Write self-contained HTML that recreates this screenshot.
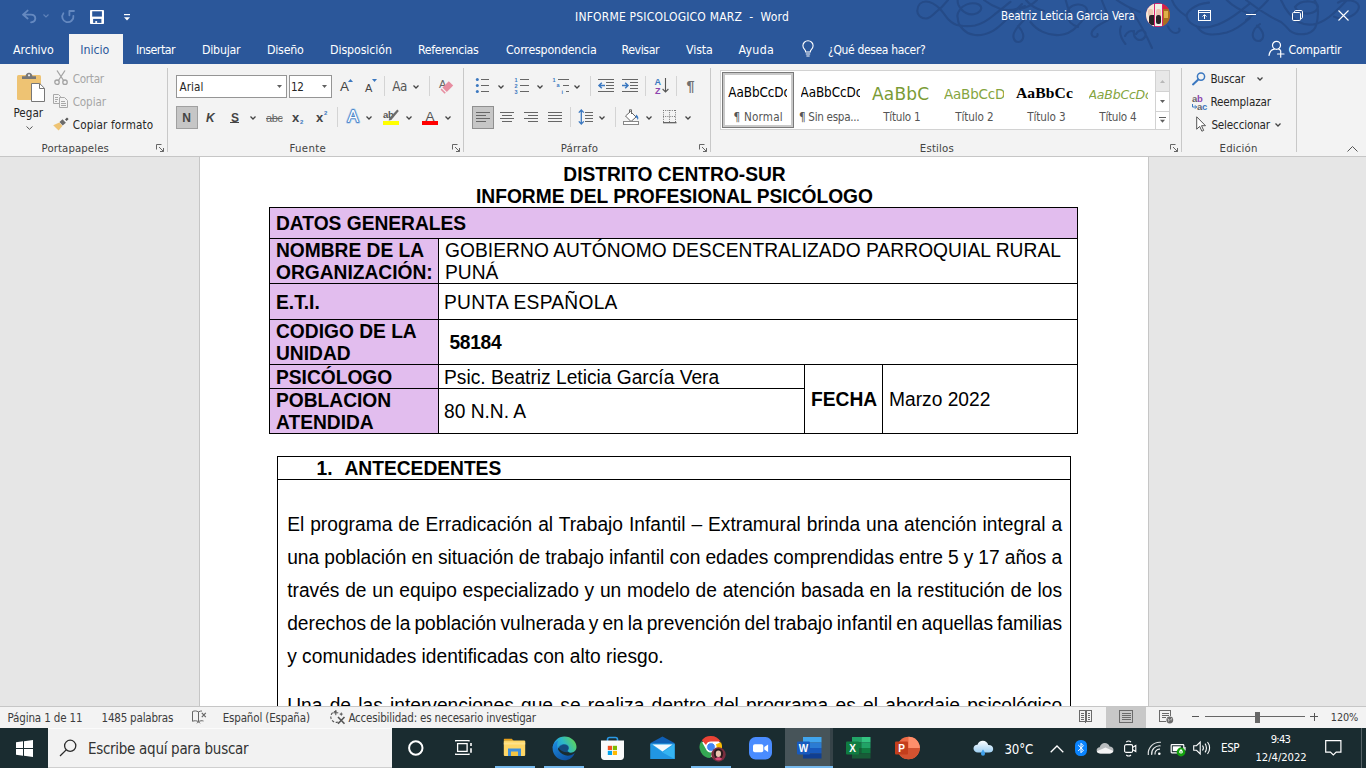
<!DOCTYPE html>
<html lang="es">
<head>
<meta charset="utf-8">
<title>INFORME PSICOLOGICO MARZ - Word</title>
<style>
*{box-sizing:border-box;margin:0;padding:0}
html,body{width:1366px;height:768px;overflow:hidden;background:#e6e6e6}
body{position:relative;font-family:"DejaVu Sans Condensed","DejaVu Sans","Liberation Sans",sans-serif;font-stretch:condensed;font-size:12px;color:#262626}
.a{position:absolute;white-space:nowrap;line-height:1}
svg{position:absolute;overflow:visible}
/* ---------- title bar + tabs ---------- */
#blue{left:0;top:0;width:1366px;height:64px;background:#2b579a}
.tt{color:#fff;font-size:12px}
.tab{color:#fff;font-size:12.4px;top:43px}
#tabsel{left:69px;top:34px;width:54px;height:30px;background:#f3f3f3}
/* ---------- ribbon ---------- */
#ribbon{left:0;top:64px;width:1366px;height:92px;background:#f3f3f3}
#ribline{left:0;top:156px;width:1366px;height:1px;background:#c6c6c6}
.sep{width:1px;background:#c8c8c8;top:68px;height:84px}
.sp{width:1px;background:#d4d4d4;height:20px}
.gl{font-size:11.5px;color:#444;top:142px}
.rt{font-size:12px;color:#262626}
.dis{color:#a6a6a6}
.box{background:#fff;border:1px solid #959595;top:75px;height:23px}
/* ---------- document ---------- */
#docbg{left:0;top:157px;width:1366px;height:549px;background:#e6e6e6;overflow:hidden}
#page{left:199px;top:0;width:950px;height:560px;background:#fff;border-left:1px solid #c6c6c6;border-right:1px solid #c6c6c6}
.doc{font-family:"Liberation Sans",sans-serif;font-size:19.2px;color:#000}
/* ---------- status bar ---------- */
#status{left:0;top:706px;width:1366px;height:22px;background:#f3f3f3;border-top:1px solid #c6c6c6}
.st{font-size:11.4px;color:#3c3c3c;top:712px}
/* ---------- taskbar ---------- */
#task{left:0;top:728px;width:1366px;height:40px;background:#1a2c30}
#search{left:48px;top:728px;width:344px;height:40px;background:#f2f2f2;border-top:1px solid #fbfbfb}
.tk{color:#fff}
</style>
</head>
<body>
<!-- ============ TITLE BAR ============ -->
<div id="blue" class="a"></div>
<!-- decorative calligraphy swirls (office background) -->
<svg class="a" style="left:900px;top:0" width="466" height="64" viewBox="900 0 466 64" fill="none" stroke="#254b88" stroke-width="2.100" stroke-linecap="round">
<path d="M948 0C944 5 940 9 936 12c-4 4-7 6.500-10 6.500-5 0-9-3.500-8.700-8C917.600 5 921 1.500 926 1.500c5 0 10 3.500 14 7.500s6 8 9 11 6 5 10.500 5.500c5.500.8 10.500.8 15.500 0 7-1.500 13-5.500 18-9.700C999 11 1005 6 1010.500 1.800"/>
<path d="M957.700 0c-.2 2 .3 4 .9 5.300 1.400 2.700 3.400 5.700 7.400 7.700 5 2.500 11 1.500 14-2 2.500-3 1-6.500-4-7.500-6-1.200-13 1.500-16 6-2.500 3.500-3 6.500-2.300 8.100.3 4.400 1.300 7.400 3.300 9.400 3 4 8 7.500 14 8 7 .6 13-1.500 18-4.200 5-2.800 9-6.800 13-10.800s10-10 16-16"/>
<path d="M1018.400 42c-4.400 0-5.900-5-4.400-9 2-5 6-9 10-13M1018.400 42c3.600 0 5.600-4 4.600-8-1-4-3-6-5-8M984 0c5 4 11 7 16 8.800 8 2.700 16 1.200 25-2.800"/>
<path d="M1020 9c6-1 12-4 17-9M1026 0c4 5 10 9 18 11M1030.500 22c6 8 17 14 29 13 8-.6 13-4 17.500-8.600 5-5 9-10 10-13.400 1.500-5-3-9-9.500-8.500-7 .6-11 5-10.500 10.500.5 5 4 9.500 11 12M1065.700 0c1 5 3 10 5 14M1108 20c-5 3-11 5-15 10-2.500 3-1.500 6.500 1.500 7 2 .3 3.500-1 3-3M1101.700 0c1.500 4 3 7.500 4.300 10.500 1.500 3.500 2 6.500 2 9.500M1116.700 0c7 5 15 9 23.300 12M1121 26.400c-2 5 0 12 4.400 17.600M1125 36c2-4 6-6 8.500-4.500"/>
<path d="M1130 8c8 12 16 26 22 40M1136 34c2-4 7-5 9-2s-1 8-5 8-7-4-6-9M1167.800 26.400c2 4 5 7 8.500 6.600 3-.4 4-3 2.700-4.500M1172 0c2 6 7 11.500 14 15.800M1209 2.600c-7 .5-13.500 3-17.500 6.200-4 3-5.500 6.500-4.500 8.800 1 4 4.800 7 9.800 8.800 6 2 14 1 21.200-1.800 9-3.600 16-8.600 22-13.200 3-2.500 7-5.500 10-8.200M1196.800 26.400c3 4.600 7 7.400 12.200 7.900 6 .6 12-.4 17.700-1.800 9-2.500 16-8 23.300-14.500M1226.700 0c6 6 14 10.500 23.300 14"/>
<path d="M1246 0c10 8 22 16 35 22 4 3 7 6.500 9 8.800 5 3.500 12 4 17.500 2.600 5-1.500 8-5 8.800-8.800 1.200-4 1.500-8 1.700-11.400.2-5-1-9.500-3.500-13.200M1268 0c-6 7-14 14-22 20M1281 0c4 9 10 17 17.700 22 6 3 12 3.200 17.600 1.700 7-2 12.500-6 17.600-10.700 5-4.500 9-8.500 13.100-13M1295 7c3-4 9-6 15-5.500 6 .5 9 3.500 7.500 7-1.500 3.500-7 5.500-12 5-5-.5-9-3-10.500-6.500M1258.300 41c-4 0-6.300-4-5.300-8s4-7 7-9M1258.300 41c3.500 0 5.500-3.500 4.700-7-.8-3.500-3-6-6-8.500M1338 2.600c3-2 8-3 13-2.100 6 1 9 4.500 7.500 8.300-1.500 4-6 7-11 8.800-5 1.500-10 1-13.500-1"/>
</svg>
<!-- quick access toolbar -->
<svg class="a" style="left:21px;top:9px" width="16" height="15" viewBox="0 0 16 15" fill="none" stroke="#6589c0" stroke-width="1.900" stroke-linecap="round" stroke-linejoin="round"><path d="M6.600 1.600L2 5.600l4.600 3.800M2.400 5.600h7.400c2.700 0 4.500 1.700 4.500 3.900 0 2-1.500 3.500-4.200 3.900"/></svg>
<svg class="a" style="left:43px;top:14px" width="6" height="4" viewBox="0 0 6 4" fill="none" stroke="#5f82b9" stroke-width="1.100"><path d="M.5.500L3 3 5.500.500"/></svg>
<svg class="a" style="left:60px;top:9px" width="15" height="15" viewBox="0 0 15 15" fill="none" stroke="#6589c0" stroke-width="1.800" stroke-linecap="round" stroke-linejoin="round"><path d="M3.400 4.200A5.600 5.600 0 1 0 13.400 6.800M9.400 6.300V2h4.600"/></svg>
<svg class="a" style="left:90px;top:10px" width="14" height="14" viewBox="0 0 14 14"><rect x="0" y="0" width="14" height="14" rx=".8" fill="#fff"/><rect x="2.200" y="1.300" width="9.700" height="5.300" fill="#2b579a"/><rect x="3.100" y="8.900" width="8.300" height="4" fill="#2b579a"/><rect x="5.300" y="11.100" width="1.800" height="1.800" fill="#fff"/></svg>
<svg class="a" style="left:123.500px;top:13.500px" width="6" height="7" viewBox="0 0 6 7" fill="#fff"><rect x="0" y="0" width="6" height="1.200"/><path d="M0 3.300h6L3 6.500z"/></svg>
<div class="a tt" style="left:575.0px;top:11.1px;font-size:12px;letter-spacing:0.197px;white-space:pre;">INFORME PSICOLOGICO MARZ  -  Word</div>
<div class="a tt" style="left:1001.0px;top:10.9px;font-size:11.5px;letter-spacing:-0.100px;">Beatriz Leticia Garcia Vera</div>
<!-- avatar -->
<div class="a" style="left:1146.200px;top:3px;width:24px;height:24px;border-radius:50%;overflow:hidden;background:#e0206e">
 <div class="a" style="left:0;top:0;width:8px;height:24px;background:#f3ead9"></div>
 <div class="a" style="left:2px;top:6px;width:5px;height:7px;background:#edc7b2;border-radius:2px"></div>
 <div class="a" style="left:3px;top:12px;width:5px;height:10px;background:#2a2226;border-radius:2px 0 0 2px"></div>
 <div class="a" style="left:9px;top:1px;width:7px;height:22px;background:#eef0e4"></div>
 <div class="a" style="left:10px;top:6px;width:5px;height:7px;background:#efc3b4;border-radius:2px"></div>
 <div class="a" style="left:9.500px;top:12px;width:5px;height:9px;background:#2a2226;border-radius:2px"></div>
 <div class="a" style="left:17px;top:0;width:7px;height:6px;background:#d6243e"></div>
 <div class="a" style="left:17px;top:6px;width:7px;height:18px;background:#a8701f"></div>
 <div class="a" style="left:18px;top:8px;width:4px;height:7px;background:#e0b04a"></div>
</div>
<!-- window controls -->
<svg class="a" style="left:1198px;top:10px" width="13" height="11" viewBox="0 0 13 11" fill="none" stroke="#fff" stroke-width="1"><path d="M.5.500h12v10H.5zM.5 2.500h12" shape-rendering="crispEdges"/><path d="M6.500 9V4.800M4.500 6.600l2-2 2 2"/></svg>
<div class="a" style="left:1246px;top:14px;width:10px;height:1px;background:#fff"></div>
<svg class="a" style="left:1292px;top:10px" width="11" height="11" viewBox="0 0 11 11" fill="none" stroke="#fff" stroke-width="1"><rect x=".5" y="2.500" width="8" height="8" rx="1.200"/><path d="M2.500 2.500V1.700C2.500 1 3 .5 3.700 .5H9.300c.7 0 1.200.5 1.200 1.200V7.300c0 .7-.5 1.200-1.200 1.200H8.500"/></svg>
<svg class="a" style="left:1338px;top:10px" width="11" height="11" viewBox="0 0 11 11" fill="none" stroke="#fff" stroke-width="1.100"><path d="M.5.500l10 10M10.500.500l-10 10"/></svg>
<!-- tabs -->
<div id="tabsel" class="a"></div>
<div class="a tab" style="left:13.0px;top:44.0px;font-size:12.3px;letter-spacing:-0.092px;">Archivo</div>
<div class="a tab" style="left:80.2px;top:44.0px;font-size:12.3px;letter-spacing:-0.041px;color:#2b579a;">Inicio</div>
<div class="a tab" style="left:136.0px;top:44.0px;font-size:12.3px;letter-spacing:-0.501px;">Insertar</div>
<div class="a tab" style="left:202.0px;top:44.0px;font-size:12.3px;letter-spacing:-0.248px;">Dibujar</div>
<div class="a tab" style="left:267.0px;top:44.0px;font-size:12.3px;letter-spacing:-0.236px;">Diseño</div>
<div class="a tab" style="left:330.0px;top:44.0px;font-size:12.3px;letter-spacing:-0.091px;">Disposición</div>
<div class="a tab" style="left:418.0px;top:44.0px;font-size:12.3px;letter-spacing:-0.367px;">Referencias</div>
<div class="a tab" style="left:506.0px;top:44.0px;font-size:12.3px;letter-spacing:-0.177px;">Correspondencia</div>
<div class="a tab" style="left:621.5px;top:44.0px;font-size:12.3px;letter-spacing:-0.434px;">Revisar</div>
<div class="a tab" style="left:686.0px;top:44.0px;font-size:12.3px;letter-spacing:-0.117px;">Vista</div>
<div class="a tab" style="left:738.5px;top:44.0px;font-size:12.3px;letter-spacing:0.297px;">Ayuda</div>
<svg class="a" style="left:802px;top:40px" width="12" height="17" viewBox="0 0 12 17" fill="none" stroke="#fff" stroke-width="1.100"><path d="M6 .8C3.100.8.900 3 .9 5.700c0 1.700.9 2.900 1.800 3.900.7.800 1 1.500 1 2.400h4.600c0-.9.300-1.600 1-2.400.9-1 1.800-2.200 1.800-3.900C11.100 3 8.900.8 6 .8zM3.800 14h4.400M4.400 16h3.200"/></svg>
<div class="a tab" style="left:828.0px;top:43.9px;font-size:12px;letter-spacing:-0.339px;">¿Qué desea hacer?</div>
<svg class="a" style="left:1268px;top:40px" width="17" height="17" viewBox="0 0 17 17" fill="none" stroke="#fff" stroke-width="1.200" stroke-linecap="round"><circle cx="8.500" cy="5.300" r="4"/><path d="M1 15.500c.5-3.600 2.600-5.800 5.300-6.300M10.800 9.300c.5.100 1 .4 1.400.7M9.500 14h6.500M12.700 10.800v6.400"/></svg>
<div class="a tab" style="left:1288.5px;top:44.0px;font-size:12.3px;letter-spacing:-0.316px;">Compartir</div>

<!-- ============ RIBBON ============ -->
<div id="ribbon" class="a"></div>
<div id="ribline" class="a"></div>
<!-- group separators -->
<div class="a sep" style="left:167px"></div><div class="a sep" style="left:463px"></div><div class="a sep" style="left:710px"></div><div class="a sep" style="left:1181px"></div><div class="a sep" style="left:1296px"></div>
<!-- ===== Portapapeles ===== -->
<svg class="a" style="left:17px;top:72px" width="28" height="30" viewBox="0 0 28 30">
<rect x="0" y="3" width="24" height="25" rx="1.500" fill="#eec373"/>
<path d="M5 7V4.300h3.600C8.800 2.200 10 .8 12 .8s3.200 1.400 3.400 3.500H19V7z" fill="#777"/><circle cx="12" cy="3.300" r="1.100" fill="#f3f3f3"/>
<path d="M14.500 11.500h8.200l4.800 4.800V29.500h-13z" fill="#fff" stroke="#777" stroke-width="1"/><path d="M22.500 11.700V16.500h4.800" fill="none" stroke="#777" stroke-width="1"/>
</svg>
<div class="a rt" style="left:13.4px;top:108.3px;font-size:11.6px;letter-spacing:0.022px;">Pegar</div>
<svg class="a" style="left:26px;top:126px" width="7" height="4" viewBox="0 0 7 4" fill="none" stroke="#555" stroke-width="1"><path d="M.5.500l3 2.800 3-2.800"/></svg>
<svg class="a" style="left:54px;top:70px" width="14" height="15" viewBox="0 0 14 15" fill="none" stroke="#a3a3a3" stroke-width="1.300"><path d="M3 .5l6.600 10M11 .5L4.400 10.500"/><circle cx="3" cy="12.200" r="2.200"/><circle cx="11" cy="12.200" r="2.200"/></svg>
<div class="a rt dis" style="left:72.7px;top:73.8px;font-size:11.6px;letter-spacing:-0.266px;">Cortar</div>
<svg class="a" style="left:53px;top:94px" width="15" height="14" viewBox="0 0 15 14" fill="none" stroke="#a8a8a8" stroke-width="1"><path d="M.5.500h5l2 2v7h-7z" fill="#f3f3f3"/><path d="M2 3.500h3M2 5.500h3M2 7.500h2"/><path d="M6.500 3.500h5l3 3v7h-8z" fill="#f3f3f3"/><path d="M8 7.500h4M8 9.500h5M8 11.500h5"/></svg>
<div class="a rt dis" style="left:72.7px;top:96.8px;font-size:11.6px;letter-spacing:-0.116px;">Copiar</div>
<svg class="a" style="left:53px;top:117px" width="16" height="14" viewBox="0 0 16 14"><path d="M.2 8.200l6.200-2.600 3 3.400-3.800 4.600z" fill="#eec373"/><path d="M6.500 5l3-2.800 3.400 3.600-3.200 2.800z" fill="#6b6b6b"/><path d="M12 2.400L14 .4l1.600 1.700-2 2z" fill="#555"/></svg>
<div class="a rt" style="left:72.7px;top:119.9px;font-size:11.6px;letter-spacing:0.166px;">Copiar formato</div>
<div class="a gl" style="left:41.6px;top:142.7px;font-size:11.3px;letter-spacing:0.100px;">Portapapeles</div>
<svg class="a lau" style="left:156px;top:144px" width="8" height="8" viewBox="0 0 8 8" fill="none" stroke="#666" stroke-width="1"><path d="M.5 5.500V.500h5M3 3l4.500 4.500M7.500 4v3.500H4"/></svg>
<!-- ===== Fuente ===== -->
<div class="a box" style="left:176px;width:111px"></div>
<div class="a box" style="left:289px;width:43px"></div>
<div class="a rt" style="left:179.5px;top:81.6px;font-size:11.6px;letter-spacing:0.098px;">Arial</div>
<div class="a rt" style="left:291.0px;top:81.6px;font-size:11.6px;letter-spacing:-.5px;">12</div>
<svg class="a" style="left:277px;top:85px" width="5" height="3" viewBox="0 0 5 3"><path d="M0 0h5L2.500 3z" fill="#606060"/></svg>
<svg class="a" style="left:322px;top:85px" width="5" height="3" viewBox="0 0 5 3"><path d="M0 0h5L2.500 3z" fill="#606060"/></svg>
<!-- grow / shrink / case / clear -->
<div class="a" style="left:340px;top:79.200px;font:13.5px 'Liberation Sans',sans-serif;color:#444">A</div>
<svg class="a" style="left:348px;top:79px" width="5" height="3" viewBox="0 0 5 3"><path d="M0 3h5L2.500 0z" fill="#3b78c0"/></svg>
<div class="a" style="left:365px;top:81.800px;font:11px 'Liberation Sans',sans-serif;color:#444">A</div>
<svg class="a" style="left:372px;top:79px" width="5" height="3" viewBox="0 0 5 3"><path d="M0 0h5L2.500 3z" fill="#3b78c0"/></svg>
<div class="a sp" style="left:384px;top:76px"></div>
<div class="a rt" style="left:392.2px;top:80.1px;font-size:13.3px;letter-spacing:-0.381px;color:#555;">Aa</div>
<svg class="a car" style="left:413px;top:85px" width="6" height="4" viewBox="0 0 6 4" fill="none" stroke="#444" stroke-width="1.250"><path d="M.5.500L3 3 5.500.500"/></svg>
<div class="a sp" style="left:429px;top:76px"></div>
<div class="a" style="left:439px;top:78px;font:11px 'Liberation Sans',sans-serif;color:#666">A</div>
<svg class="a" style="left:441px;top:80px" width="13" height="14" viewBox="0 0 13 14"><path d="M7.800 1.200L12.200 5.600 5.800 12 1.400 7.600z" fill="#e78da0"/><path d="M.6 8.600l4.200 4.200-1.200 1-4-4z" fill="#e78da0"/></svg>
<!-- row 2 -->
<div class="a" style="left:176px;top:106px;width:22px;height:23px;background:#c6c6c6;border:1px solid #a0a0a0"></div>
<div class="a" style="left:182.300px;top:110.500px;font:bold 12px 'Liberation Sans',sans-serif;color:#444">N</div>
<div class="a" style="left:206px;top:110.500px;font:italic bold 12px 'Liberation Sans',sans-serif;color:#444">K</div>
<div class="a" style="left:231px;top:110.500px;font:bold 12px 'Liberation Sans',sans-serif;color:#444">S</div>
<div class="a" style="left:230px;top:122px;width:9px;height:1px;background:#444"></div>
<svg class="a car" style="left:250px;top:116px" width="6" height="4" viewBox="0 0 6 4" fill="none" stroke="#444" stroke-width="1.250"><path d="M.5.500L3 3 5.500.500"/></svg>
<div class="a" style="left:266px;top:112px;font:11px 'Liberation Sans',sans-serif;color:#666;letter-spacing:-.4px;text-decoration:line-through">abc</div>
<div class="a" style="left:292px;top:109.500px;font:bold 13px 'Liberation Sans',sans-serif;color:#444">x</div>
<div class="a" style="left:300px;top:119px;font:bold 6px 'Liberation Sans',sans-serif;color:#3b78c0">2</div>
<div class="a" style="left:316px;top:109.500px;font:bold 13px 'Liberation Sans',sans-serif;color:#444">x</div>
<div class="a" style="left:324px;top:109.500px;font:bold 6px 'Liberation Sans',sans-serif;color:#3b78c0">2</div>
<div class="a sp" style="left:337px;top:107px"></div>
<svg class="a" style="left:344px;top:107px" width="18" height="18" viewBox="0 0 18 18"><text x="9" y="15.300" text-anchor="middle" font-family="Liberation Sans,sans-serif" font-size="16.500" fill="none" stroke="#a9cbee" stroke-width="3.200" stroke-linejoin="round">A</text><text x="9" y="15.300" text-anchor="middle" font-family="Liberation Sans,sans-serif" font-size="16.500" fill="#fff" stroke="#3b78c0" stroke-width="1.500" paint-order="stroke" stroke-linejoin="round">A</text></svg>
<svg class="a car" style="left:366px;top:116px" width="6" height="4" viewBox="0 0 6 4" fill="none" stroke="#444" stroke-width="1.250"><path d="M.5.500L3 3 5.500.500"/></svg>
<div class="a" style="left:383px;top:108.500px;font:bold 9.500px 'Liberation Sans',sans-serif;color:#555;letter-spacing:-.3px">ab</div>
<svg class="a" style="left:387px;top:109px" width="12" height="12" viewBox="0 0 12 12"><path d="M10.300.6l1.500 1.300L4.300 11l-2.600.6.700-2.500z" fill="#6b6b6b"/></svg>
<div class="a" style="left:383px;top:121px;width:16px;height:4px;background:#ffff00"></div>
<svg class="a car" style="left:406px;top:116px" width="6" height="4" viewBox="0 0 6 4" fill="none" stroke="#444" stroke-width="1.250"><path d="M.5.500L3 3 5.500.500"/></svg>
<div class="a" style="left:425.500px;top:109px;font:13.500px 'Liberation Sans',sans-serif;color:#555">A</div>
<div class="a" style="left:422px;top:121px;width:16px;height:4px;background:#ff0000"></div>
<svg class="a car" style="left:445px;top:116px" width="6" height="4" viewBox="0 0 6 4" fill="none" stroke="#444" stroke-width="1.250"><path d="M.5.500L3 3 5.500.500"/></svg>
<div class="a gl" style="left:289.5px;top:142.7px;font-size:11.3px;letter-spacing:0.350px;">Fuente</div>
<svg class="a lau" style="left:452px;top:144px" width="8" height="8" viewBox="0 0 8 8" fill="none" stroke="#666" stroke-width="1"><path d="M.5 5.500V.500h5M3 3l4.500 4.500M7.500 4v3.500H4"/></svg>
<!-- ===== Párrafo ===== -->
<svg class="a" style="left:475px;top:77px" width="16" height="17" viewBox="0 0 16 17"><g fill="#3b78c0"><circle cx="2.300" cy="2.500" r="1.500"/><circle cx="2.300" cy="8.500" r="1.500"/><circle cx="2.300" cy="14.500" r="1.500"/></g><path d="M6 2.500h8M6 8.500h8M6 14.500h8" stroke="#666" stroke-width="1" shape-rendering="crispEdges"/></svg>
<svg class="a car" style="left:498px;top:85px" width="6" height="4" viewBox="0 0 6 4" fill="none" stroke="#444" stroke-width="1.250"><path d="M.5.500L3 3 5.500.500"/></svg>
<svg class="a" style="left:514px;top:77px" width="16" height="17" viewBox="0 0 16 17"><g font-family="Liberation Sans,sans-serif" font-size="5.500" font-weight="bold" fill="#3b78c0"><text x=".5" y="4.800">1</text><text x=".5" y="10.700">2</text><text x=".5" y="16.500">3</text></g><path d="M6 2.500h9M6 8.500h9M6 14.500h9" stroke="#666" stroke-width="1" shape-rendering="crispEdges"/></svg>
<svg class="a car" style="left:537px;top:85px" width="6" height="4" viewBox="0 0 6 4" fill="none" stroke="#444" stroke-width="1.250"><path d="M.5.500L3 3 5.500.500"/></svg>
<svg class="a" style="left:552px;top:77px" width="18" height="17" viewBox="0 0 18 17"><g font-family="Liberation Sans,sans-serif" font-size="5.500" font-weight="bold" fill="#3b78c0"><text x=".5" y="4.800">1</text><text x="4.500" y="10.400">a</text><text x="9.500" y="16.500">i</text></g><path d="M6 2.500h10.500M11 8.500h5.500M14 14.500h2.500" stroke="#666" stroke-width="1" shape-rendering="crispEdges"/></svg>
<svg class="a car" style="left:574px;top:85px" width="6" height="4" viewBox="0 0 6 4" fill="none" stroke="#444" stroke-width="1.250"><path d="M.5.500L3 3 5.500.500"/></svg>
<div class="a sp" style="left:590px;top:76px"></div>
<svg class="a" style="left:598px;top:79px" width="16" height="13" viewBox="0 0 16 13"><path d="M0 .5h16M8 3.500h8M8 6.500h8M8 9.500h8M0 12.500h16" stroke="#666" stroke-width="1" shape-rendering="crispEdges"/><path d="M7 6.500H1.200M3.800 3.800L1 6.500l2.800 2.700" fill="none" stroke="#3b78c0" stroke-width="1.500"/></svg>
<svg class="a" style="left:622px;top:79px" width="16" height="13" viewBox="0 0 16 13"><path d="M0 .5h16M8 3.500h8M8 6.500h8M8 9.500h8M0 12.500h16" stroke="#666" stroke-width="1" shape-rendering="crispEdges"/><path d="M0 6.500h5.800M3.200 3.800L6 6.500 3.200 9.200" fill="none" stroke="#3b78c0" stroke-width="1.500"/></svg>
<div class="a sp" style="left:645px;top:76px"></div>
<div class="a" style="left:654.500px;top:77px;font:bold 9px 'Liberation Sans',sans-serif;color:#3b78c0">A</div>
<div class="a" style="left:655px;top:85.500px;font:bold 9px 'Liberation Sans',sans-serif;color:#8e44ad">Z</div>
<svg class="a" style="left:662px;top:78px" width="7" height="15" viewBox="0 0 7 15" fill="none" stroke="#555" stroke-width="1.100"><path d="M3.500 0v14M.6 11l2.900 3 2.900-3"/></svg>
<div class="a sp" style="left:676px;top:76px"></div>
<div class="a" style="left:686.500px;top:78px;font:bold 14.500px 'Liberation Sans',sans-serif;color:#707070">¶</div>
<!-- row 2 -->
<div class="a" style="left:472px;top:106px;width:22px;height:23px;background:#c6c6c6;border:1px solid #8f8f8f"></div>
<svg class="a" style="left:476px;top:112px" width="14" height="10" viewBox="0 0 14 10" stroke="#666" stroke-width="1" shape-rendering="crispEdges"><path d="M0 .5h14M0 3.500h10M0 6.500h14M0 9.500h10"/></svg>
<svg class="a" style="left:500px;top:112px" width="14" height="10" viewBox="0 0 14 10" stroke="#666" stroke-width="1" shape-rendering="crispEdges"><path d="M0 .5h14M2 3.500h10M0 6.500h14M2 9.500h10"/></svg>
<svg class="a" style="left:524px;top:112px" width="14" height="10" viewBox="0 0 14 10" stroke="#666" stroke-width="1" shape-rendering="crispEdges"><path d="M0 .5h14M4 3.500h10M0 6.500h14M4 9.500h10"/></svg>
<svg class="a" style="left:548px;top:112px" width="14" height="10" viewBox="0 0 14 10" stroke="#666" stroke-width="1" shape-rendering="crispEdges"><path d="M0 .5h14M0 3.500h14M0 6.500h14M0 9.500h14"/></svg>
<div class="a sp" style="left:570px;top:107px"></div>
<svg class="a" style="left:578px;top:109px" width="15" height="16" viewBox="0 0 15 16" fill="none"><path d="M3.300 1v14M.8 3.600L3.300 1l2.500 2.600M.8 12.400L3.300 15l2.500-2.600" stroke="#3b78c0" stroke-width="1.300"/><path d="M7 3.500h8M7 6.500h8M7 9.500h8M7 12.500h8" stroke="#666" stroke-width="1" shape-rendering="crispEdges"/></svg>
<svg class="a car" style="left:599px;top:116px" width="6" height="4" viewBox="0 0 6 4" fill="none" stroke="#444" stroke-width="1.250"><path d="M.5.500L3 3 5.500.500"/></svg>
<div class="a sp" style="left:615px;top:107px"></div>
<svg class="a" style="left:623px;top:109px" width="17" height="16" viewBox="0 0 17 16" fill="none"><path d="M7.500 2.500l5.500 5.500-5 4.500L2.500 7z" fill="#fff" stroke="#666" stroke-width="1"/><path d="M6.500 4V.8h2V5" stroke="#666" stroke-width="1"/><path d="M13.200 5.500c2 1.500 2.800 3.500 1.600 5.500-.4-1.600-1.200-2.600-2.400-3z" fill="#3b78c0"/><rect x=".5" y="12.500" width="15" height="3" fill="#fff" stroke="#888" stroke-width="1"/></svg>
<svg class="a car" style="left:646px;top:116px" width="6" height="4" viewBox="0 0 6 4" fill="none" stroke="#444" stroke-width="1.250"><path d="M.5.500L3 3 5.500.500"/></svg>
<svg class="a" style="left:663px;top:110px" width="14" height="14" viewBox="0 0 14 14" fill="none" stroke="#777" stroke-width="1"><path d="M.5 0v12M6.500 0v12M12.500 0v12M0 .5h13M0 6.500h13" stroke-dasharray="1 1.200"/><path d="M0 12.700h13.500" stroke="#555" stroke-width="1.200"/></svg>
<svg class="a car" style="left:685px;top:116px" width="6" height="4" viewBox="0 0 6 4" fill="none" stroke="#444" stroke-width="1.250"><path d="M.5.500L3 3 5.500.500"/></svg>
<div class="a gl" style="left:560.7px;top:142.7px;font-size:11.3px;letter-spacing:0.199px;">Párrafo</div>
<svg class="a lau" style="left:699px;top:144px" width="8" height="8" viewBox="0 0 8 8" fill="none" stroke="#666" stroke-width="1"><path d="M.5 5.500V.500h5M3 3l4.500 4.500M7.500 4v3.500H4"/></svg>
<!-- ===== Estilos ===== -->
<div class="a" style="left:720px;top:70px;width:450px;height:60px;background:#fff;border:1px solid #d2d2d2"></div>
<div class="a" style="left:722px;top:72px;width:72px;height:56px;border:1px solid #7a7a7a;background:#c9c9c9"></div>
<div class="a" style="left:725px;top:75px;width:66px;height:50px;background:#fff"></div>
<div class="a" style="left:1155px;top:71px;width:14px;height:58px;background:#fff;border-left:1px solid #d2d2d2"></div>
<div class="a" style="left:1156px;top:71px;width:13px;height:20px;background:#e8e8e8"></div>
<div class="a" style="left:1155px;top:91px;width:14px;height:1px;background:#d2d2d2"></div>
<div class="a" style="left:1155px;top:111px;width:14px;height:1px;background:#d2d2d2"></div>
<svg class="a" style="left:1160px;top:80px" width="5" height="3" viewBox="0 0 5 3"><path d="M0 3h5L2.500 0z" fill="#b8b8b8"/></svg>
<svg class="a" style="left:1160px;top:100px" width="5" height="3" viewBox="0 0 5 3"><path d="M0 0h5L2.500 3z" fill="#606060"/></svg>
<svg class="a" style="left:1159px;top:117px" width="7" height="6" viewBox="0 0 7 6" fill="#606060"><rect x="0" y="0" width="7" height="1"/><path d="M1 2.800h5L3.500 5.800z"/></svg>
<div class="a" style="left:728.300px;top:84px;width:59px;overflow:hidden;height:18px"><div class="a" style="left:0;top:2.300px;font-size:13.400px;color:#000;letter-spacing:-.1px">AaBbCcDc</div></div>
<div class="a" style="left:800.500px;top:84px;width:59px;overflow:hidden;height:18px"><div class="a" style="left:0;top:2.300px;font-size:13.400px;color:#000;letter-spacing:-.1px">AaBbCcDc</div></div>
<div class="a" style="left:872px;top:83.500px;font:17px 'DejaVu Sans','Liberation Sans',sans-serif;font-stretch:normal;color:#7a9b35;letter-spacing:.2px">AaBbC</div>
<div class="a" style="left:944px;top:84px;width:59.500px;overflow:hidden;height:18px"><div class="a" style="left:0;top:2px;font:13.500px 'DejaVu Sans','Liberation Sans',sans-serif;font-stretch:normal;color:#84a440;letter-spacing:-.2px">AaBbCcD</div></div>
<div class="a" style="left:1016px;top:84.300px;font:bold 15.600px 'Liberation Serif',serif;color:#000;letter-spacing:.1px">AaBbCc</div>
<div class="a" style="left:1088.500px;top:84px;width:59px;overflow:hidden;height:18px"><div class="a" style="left:0;top:2.500px;font:italic 12.500px 'DejaVu Sans','Liberation Sans',sans-serif;font-stretch:normal;color:#84a440;letter-spacing:-.2px">AaBbCcDc</div></div>
<div class="a rt" style="left:733.5px;top:112.1px;font-size:11.6px;letter-spacing:0.220px;color:#555;">¶ Normal</div>
<div class="a rt" style="left:799.0px;top:112.1px;font-size:11.6px;letter-spacing:-0.299px;color:#555;">¶ Sin espa...</div>
<div class="a rt" style="left:883.2px;top:112.1px;font-size:11.6px;letter-spacing:-0.237px;color:#555;">Título 1</div>
<div class="a rt" style="left:955.2px;top:112.1px;font-size:11.6px;letter-spacing:-0.122px;color:#555;">Título 2</div>
<div class="a rt" style="left:1027.2px;top:112.1px;font-size:11.6px;letter-spacing:-0.122px;color:#555;">Título 3</div>
<div class="a rt" style="left:1099.3px;top:112.1px;font-size:11.6px;letter-spacing:-0.279px;color:#555;">Título 4</div>
<div class="a gl" style="left:919.8px;top:142.7px;font-size:11.3px;letter-spacing:0.189px;">Estilos</div>
<svg class="a lau" style="left:1170px;top:144px" width="8" height="8" viewBox="0 0 8 8" fill="none" stroke="#666" stroke-width="1"><path d="M.5 5.500V.500h5M3 3l4.500 4.500M7.500 4v3.500H4"/></svg>
<!-- ===== Edición ===== -->
<svg class="a" style="left:1192px;top:72px" width="14" height="13" viewBox="0 0 14 13" fill="none" stroke="#3b78c0"><circle cx="9" cy="4.600" r="3.600" stroke-width="1.500"/><path d="M6.300 7.400L1 12.400" stroke-width="2" stroke-linecap="round"/></svg>
<div class="a rt" style="left:1210.4px;top:73.8px;font-size:11.6px;letter-spacing:-0.186px;">Buscar</div>
<svg class="a car" style="left:1257px;top:77px" width="6" height="4" viewBox="0 0 6 4" fill="none" stroke="#444" stroke-width="1.250"><path d="M.5.500L3 3 5.500.500"/></svg>
<div class="a" style="left:1192px;top:93px;font:bold 9.500px 'Liberation Sans',sans-serif;color:#666;letter-spacing:-.2px">a<span style="color:#8e44ad">b</span></div>
<div class="a" style="left:1197px;top:100.500px;font:bold 9.500px 'Liberation Sans',sans-serif;color:#666;letter-spacing:-.2px">a<span style="color:#3b78c0">c</span></div>
<svg class="a" style="left:1192px;top:104px" width="5" height="5" viewBox="0 0 5 5" fill="none" stroke="#3b78c0" stroke-width="1"><path d="M.5 0v3h4M3 1.300L4.700 3 3 4.700"/></svg>
<div class="a rt" style="left:1210.4px;top:97.3px;font-size:11.6px;letter-spacing:-0.123px;">Reemplazar</div>
<svg class="a" style="left:1196px;top:116px" width="10" height="16" viewBox="0 0 10 16"><path d="M.7.800v12.400l3-2.800 2.200 4.800 1.800-.8-2.200-4.700h4z" fill="#fff" stroke="#555" stroke-width="1" stroke-linejoin="round"/></svg>
<div class="a rt" style="left:1211.4px;top:119.9px;font-size:11.6px;letter-spacing:-0.171px;">Seleccionar</div>
<svg class="a car" style="left:1275px;top:123px" width="6" height="4" viewBox="0 0 6 4" fill="none" stroke="#444" stroke-width="1.250"><path d="M.5.500L3 3 5.500.500"/></svg>
<div class="a gl" style="left:1219.6px;top:142.7px;font-size:11.3px;letter-spacing:0.179px;">Edición</div>
<svg class="a" style="left:1347px;top:146px" width="11" height="6" viewBox="0 0 11 6" fill="none" stroke="#555" stroke-width="1"><path d="M.5 5.500l5-5 5 5"/></svg>


<!-- ============ DOCUMENT ============ -->
<div id="docbg" class="a"><div id="page" class="a">

<div class="a" id="d0" style="left:-200px;top:-157px;width:1366px;height:768px">
<style>
.ln{position:absolute;background:#000}
.pu{position:absolute;background:#e2bdee}
.t{position:absolute;white-space:nowrap;line-height:22px;font-size:19.2px;color:#000;font-family:"Liberation Sans",sans-serif;transform:scaleY(1.06);transform-origin:0 0}
.b{font-weight:bold}
.j{width:775px;left:287px;text-align:justify;text-align-last:justify;white-space:normal}
</style>
<!-- heading -->
<div class="t b" style="left:277px;width:795px;text-align:center;top:163px">DISTRITO CENTRO-SUR</div>
<div class="t b" style="left:277px;width:795px;text-align:center;top:185px">INFORME DEL PROFESIONAL PSICÓLOGO</div>
<!-- table 1 fills -->
<div class="pu" style="left:270px;top:208px;width:807px;height:30px"></div>
<div class="pu" style="left:270px;top:239px;width:168px;height:194px"></div>
<!-- table 1 horizontal lines -->
<div class="ln" style="left:269px;top:207px;width:809px;height:1px"></div>
<div class="ln" style="left:269px;top:238px;width:809px;height:1px"></div>
<div class="ln" style="left:269px;top:283px;width:809px;height:1px"></div>
<div class="ln" style="left:269px;top:319px;width:809px;height:1px"></div>
<div class="ln" style="left:269px;top:364px;width:809px;height:1px"></div>
<div class="ln" style="left:269px;top:388px;width:536px;height:1px"></div>
<div class="ln" style="left:269px;top:433px;width:809px;height:1px"></div>
<!-- table 1 vertical lines -->
<div class="ln" style="left:269px;top:207px;width:1px;height:227px"></div>
<div class="ln" style="left:1077px;top:207px;width:1px;height:227px"></div>
<div class="ln" style="left:438px;top:238px;width:1px;height:196px"></div>
<div class="ln" style="left:804px;top:364px;width:1px;height:70px"></div>
<div class="ln" style="left:882px;top:364px;width:1px;height:70px"></div>
<!-- table 1 text -->
<div class="t b" style="left:276px;top:212px">DATOS GENERALES</div>
<div class="t b" style="left:276px;top:239px">NOMBRE DE LA</div>
<div class="t b" style="left:276px;top:261px">ORGANIZACIÓN:</div>
<div class="t" style="left:445px;top:239px;letter-spacing:.06px">GOBIERNO AUTÓNOMO DESCENTRALIZADO PARROQUIAL RURAL</div>
<div class="t" style="left:445px;top:261px">PUNÁ</div>
<div class="t b" style="left:276px;top:291px">E.T.I.</div>
<div class="t" style="left:444px;top:291px;letter-spacing:.27px">PUNTA ESPAÑOLA</div>
<div class="t b" style="left:276px;top:320px">CODIGO DE LA</div>
<div class="t b" style="left:276px;top:342px">UNIDAD</div>
<div class="t b" style="left:449.5px;top:331px;letter-spacing:-.3px">58184</div>
<div class="t b" style="left:276px;top:366px">PSICÓLOGO</div>
<div class="t" style="left:444px;top:366px">Psic. Beatriz Leticia García Vera</div>
<div class="t b" style="left:276px;top:389px">POBLACION</div>
<div class="t b" style="left:276px;top:411px">ATENDIDA</div>
<div class="t" style="left:444px;top:400px">80 N.N. A</div>
<div class="t b" style="left:811px;top:388px">FECHA</div>
<div class="t" style="left:889px;top:388px">Marzo 2022</div>
<!-- table 2 -->
<div class="ln" style="left:277px;top:456px;width:794px;height:1px"></div>
<div class="ln" style="left:277px;top:479px;width:794px;height:1px"></div>
<div class="ln" style="left:277px;top:456px;width:1px;height:260px"></div>
<div class="ln" style="left:1070px;top:456px;width:1px;height:260px"></div>
<div class="t b" style="left:316.5px;top:457px">1.</div>
<div class="t b" style="left:344.5px;top:457px">ANTECEDENTES</div>
<div class="t" style="left:287.2px;top:513.3px;word-spacing:0.617px">El programa de Erradicación al Trabajo Infantil – Extramural brinda una atención integral a</div>
<div class="t" style="left:287.2px;top:546.3px;word-spacing:-0.253px">una población en situación de trabajo infantil con edades comprendidas entre 5 y 17 años a</div>
<div class="t" style="left:287.2px;top:579.3px;word-spacing:0.387px">través de un equipo especializado y un modelo de atención basada en la restitución de los</div>
<div class="t" style="left:287.2px;top:612.3px;word-spacing:-1.335px">derechos de la población vulnerada y en la prevención del trabajo infantil en aquellas familias</div>
<div class="t" style="left:287.2px;top:645.3px">y comunidades identificadas con alto riesgo.</div>
<div class="t" style="left:287.2px;top:694.3px;word-spacing:1.928px">Una de las intervenciones que se realiza dentro del programa es el abordaje psicológico</div>
</div>


</div></div>
<!-- ============ STATUS BAR ============ -->
<div id="status" class="a"></div>
<div class="a st" style="left:7.5px;top:712.7px;font-size:11.5px;letter-spacing:-0.143px;">Página 1 de 11</div>
<div class="a st" style="left:101.5px;top:712.7px;font-size:11.5px;letter-spacing:-0.199px;">1485 palabras</div>
<svg class="a" style="left:192px;top:710px" width="15" height="14" viewBox="0 0 15 14" fill="none" stroke="#666" stroke-width="1"><path d="M.5 1.500c2-.8 4-.8 6 .4v9.800c-2-1.200-4-1.200-6-.4zM6.500 1.900c1.200-.7 2.300-1 3.500-.9M6.500 11.700c1.600-1 3.300-1.200 5-.7M5 13.300l1.500-1.500 1.500 1.500"/><path d="M9.800 2.800l4 4.400M13.800 2.800l-4 4.400" stroke-width="1.200"/></svg>
<div class="a st" style="left:222.7px;top:712.7px;font-size:11.5px;letter-spacing:-0.164px;">Español (España)</div>
<svg class="a" style="left:329px;top:710px" width="17" height="15" viewBox="0 0 17 15" fill="none" stroke="#555" stroke-width="1.100"><path d="M7.500 1.200A5.600 5.600 0 1 0 9.500 12" stroke-dasharray="2.600 1.600"/><path d="M6.800 0v5.200M4.300 2.800h5" stroke-width="1"/><path d="M9 7l6.500 6.800M15.500 7L9 13.800" stroke-width="1.600"/><path d="M12.200 2l.6 1.500 1.500.6-1.500.6-.6 1.500-.6-1.500-1.500-.6 1.500-.6z" fill="#555" stroke="none"/></svg>
<div class="a st" style="left:348.4px;top:712.7px;font-size:11.5px;letter-spacing:-0.178px;">Accesibilidad: es necesario investigar</div>
<svg class="a" style="left:1079px;top:710px" width="13" height="13" viewBox="0 0 13 13" fill="none" stroke="#6a6a6a" stroke-width="1" shape-rendering="crispEdges"><path d="M.5.500h5.500v11H.5zM7 .500h5.500v11H7zM2 3.500h2.500M2 5.500h2.500M2 7.500h2.500M2 9.500h2.500M8.500 3.500H11M8.500 5.500H11M8.500 7.500H11M8.500 9.500H11M6.500 .500v12"/></svg>
<div class="a" style="left:1106px;top:707px;width:40px;height:21px;background:#c8c8c8"></div>
<svg class="a" style="left:1119px;top:710px" width="14" height="13" viewBox="0 0 14 13" fill="none" stroke="#6a6a6a" stroke-width="1" shape-rendering="crispEdges"><rect x=".5" y=".5" width="13" height="12"/><path d="M2.500 3.500h9M2.500 5.500h9M2.500 7.500h9M2.500 9.500h9"/></svg>
<svg class="a" style="left:1159px;top:710px" width="15" height="14" viewBox="0 0 15 14" fill="none" stroke="#6a6a6a" stroke-width="1"><path d="M7 11.500H.5V.5h11V6M2.500 3.500h7M2.500 5.500h7M2.500 7.500h4" shape-rendering="crispEdges"/><circle cx="10.800" cy="10" r="3.400" fill="#6a6a6a" stroke="none"/><path d="M8.600 8.800c1.200.2 1.600 1.200 1 2.600M13.200 8.400c-1 .2-1.500.9-1.100 1.900" stroke="#f3f3f3" stroke-width=".9"/></svg>
<div class="a" style="left:1192px;top:716px;width:7px;height:1px;background:#555"></div>
<div class="a" style="left:1205px;top:716px;width:100px;height:1px;background:#666"></div>
<div class="a" style="left:1255px;top:712px;width:5px;height:11px;background:#666"></div>
<div class="a" style="left:1310px;top:716px;width:8px;height:1px;background:#555"></div><div class="a" style="left:1313.500px;top:712.500px;width:1px;height:8px;background:#555"></div>
<div class="a st" style="left:1330.8px;top:713.0px;font-size:10.8px;letter-spacing:-0.079px;">120%</div>

<!-- ============ TASKBAR ============ -->
<div id="task" class="a"></div>
<div id="search" class="a"></div>
<div class="a" style="left:48px;top:767px;width:344px;height:1px;background:#cfcfcf"></div>
<svg class="a" style="left:15.500px;top:739.500px" width="17" height="17" viewBox="0 0 17 17" fill="#fff"><path d="M0 2.300L7 1.300V8H0zM8 1.200L17 0v8H8zM0 9h7v6.700l-7-1zM8 9h9v8l-9-1.200z"/></svg>
<svg class="a" style="left:59px;top:739px" width="19" height="18" viewBox="0 0 19 18" fill="none" stroke="#2b2b2b" stroke-width="1.300"><circle cx="11.200" cy="6.800" r="5.600"/><path d="M7.200 10.900L1 17"/></svg>
<div class="a a" style="left:88.0px;top:742.4px;font-size:15px;letter-spacing:-0.289px;color:#333;">Escribe aquí para buscar</div>
<!-- cortana + task view -->
<svg class="a" style="left:407px;top:739px" width="18" height="18" viewBox="0 0 18 18" fill="none" stroke="#fff" stroke-width="2"><circle cx="8.800" cy="9" r="6.700"/></svg>
<svg class="a" style="left:455px;top:740px" width="18" height="15" viewBox="0 0 18 15" fill="none" stroke="#fff" stroke-width="1.300"><rect x="2.600" y="3.600" width="9.500" height="7.800"/><path d="M.7 1.500V.700h13.300v.8M.7 13.500v.8h13.300v-.8"/><path d="M16 3v3M16 8.200v4.600" stroke-width="1.600"/></svg>
<!-- explorer -->
<svg class="a" style="left:503px;top:738px" width="23" height="19" viewBox="0 0 23 19"><path d="M.8 1.800C.8 1.200 1.200.8 1.800.8h7l1.800 2H.8z" fill="#e8a11b"/><rect x=".8" y="2.600" width="21.400" height="15.400" rx="1" fill="#ffd766"/><path d="M.8 4.500h21.400v2H.8z" fill="#ffe28a"/><path d="M5 10.600h13V18h-3v-4.300H8V18H5z" fill="#3f8fdc"/><rect x="8" y="13.700" width="7" height="4.300" fill="#f4c542"/></svg>
<div class="a" style="left:495px;top:766px;width:40px;height:2px;background:#76b9ed"></div>
<!-- edge -->
<svg class="a" style="left:551.500px;top:736px" width="25" height="25" viewBox="0 0 25 25"><defs><linearGradient id="eg1" x1="0" y1=".6" x2="1" y2=".2"><stop offset="0" stop-color="#1f8fe0"/><stop offset=".45" stop-color="#2cb7c9"/><stop offset="1" stop-color="#63d64d"/></linearGradient><linearGradient id="eg2" x1="0" y1="0" x2=".8" y2="1"><stop offset="0" stop-color="#1e8fe3"/><stop offset="1" stop-color="#0d4c9c"/></linearGradient></defs>
<path d="M.7 11.500C1.200 5.300 6.200.500 12.500.500c6.700 0 12 5 12 10.600 0 3.300-2.500 5.600-5.700 5.600-1.900 0-3.200-.8-3.200-1.900 0-.9 1-1.300 1-2.800 0-2-1.900-3.500-4.300-3.500-3.200 0-6 2.400-6.600 5.500z" fill="url(#eg1)"/>
<path d="M.6 12.300C.6 9 2.800 6 6.200 4.800 4.500 7.500 4.700 11.500 6.800 14.800c2.600 4 7.400 5.700 12 4.500 1.700-.5 3-1.300 3.900-2.300-1.500 4.400-5.500 7.300-10.200 7.300C5.900 24.300.6 19 .6 12.300z" fill="url(#eg2)"/>
<path d="M6.300 11.200c1.400-2.100 3.600-3.200 6-3.200 2.600 0 4.700 1.700 4.700 3.900 0 1.500-1 2-1 2.900 0 .5.300.9.800 1.200-4 .9-8.300-.8-10.500-4.800z" fill="#1066bf" opacity=".55"/>
</svg>
<div class="a" style="left:544px;top:766px;width:40px;height:2px;background:#76b9ed"></div>
<!-- store -->
<svg class="a" style="left:600px;top:736px" width="25" height="25" viewBox="0 0 25 25"><path d="M7.500 6V3.600C7.500 2.300 8.300 1.500 9.500 1.500h6c1.200 0 2 .8 2 2.100V6" fill="none" stroke="#2b9ae6" stroke-width="1.600"/><path d="M1 4.600h23v16.200c0 1.800-1.400 3.200-3.200 3.200H4.200C2.400 24 1 22.600 1 20.800z" fill="#fafafa"/><rect x="7.800" y="9.800" width="4.200" height="4.200" fill="#f25022"/><rect x="12.800" y="9.800" width="4.200" height="4.200" fill="#7fba00"/><rect x="7.800" y="14.800" width="4.200" height="4.200" fill="#00a4ef"/><rect x="12.800" y="14.800" width="4.200" height="4.200" fill="#ffb900"/></svg>
<!-- mail -->
<svg class="a" style="left:649.500px;top:736px" width="25" height="24" viewBox="0 0 25 24"><path d="M12.500 .5L24.500 7v3H.5V7z" fill="#0f5fb5"/><rect x=".5" y="7.500" width="24" height="15.500" fill="#2aa3ea"/><path d="M2.500 8.500h20L12.500 15.500z" fill="#f5f9fd"/><path d="M.5 23V8l12 8.500L24.500 8v15z" fill="#2196e3"/><path d="M12.500 16.500L24.500 8v15z" fill="#35b4f2"/></svg>
<!-- chrome -->
<svg class="a" style="left:699px;top:735px" width="30" height="30" viewBox="0 0 30 30"><circle cx="12" cy="12" r="10" fill="#fff"/><path d="M12 1a11 11 0 0 1 9.600 5.600H12a5.400 5.400 0 0 0-5 3.400L2.800 5.300A11 11 0 0 1 12 1z" fill="#ea4335"/><path d="M22 7.300a11 11 0 0 1-9.400 15.700l4.200-8.200a5.400 5.400 0 0 0 .2-5.500z" fill="#fbbc05" transform="translate(0 0)"/><path d="M2.400 6l4.500 8a5.400 5.400 0 0 0 6.300 3.200L11.400 23A11 11 0 0 1 2.400 6z" fill="#34a853"/><circle cx="12" cy="12" r="4.400" fill="#4285f4" stroke="#fff" stroke-width="1"/><circle cx="19.500" cy="19.500" r="7.200" fill="#7a2f3f"/><path d="M15 17c1-4 7-4.500 9 0 .6 3-1 7-4.500 7.600C16.500 24.500 14.500 20.500 15 17z" fill="#2a1a1c"/><ellipse cx="19.400" cy="18.800" rx="2.600" ry="3.200" fill="#e9c3ae"/><path d="M16 24c.8-2.200 6-2.200 7 0-1.500 1.800-5.200 1.800-7 0z" fill="#d94a78"/></svg>
<div class="a" style="left:691px;top:766px;width:40px;height:2px;background:#76b9ed"></div>
<!-- zoom -->
<svg class="a" style="left:748.500px;top:736.500px" width="23" height="23" viewBox="0 0 23 23"><rect x="0" y="0" width="23" height="22.500" rx="6.500" fill="#4a8cff"/><rect x="4" y="7.300" width="10.300" height="8" rx="1.800" fill="#fff"/><path d="M15.300 10l3.800-2.500v7.600L15.300 12.600z" fill="#fff"/></svg>
<!-- word (active) -->
<div class="a" style="left:785px;top:728px;width:45px;height:40px;background:#475459"></div>
<div class="a" style="left:830px;top:728px;width:3px;height:40px;background:#364348"></div>
<div class="a" style="left:785px;top:766px;width:48px;height:2px;background:#76b9ed"></div>
<svg class="a" style="left:797px;top:737px" width="25" height="22" viewBox="0 0 25 22"><rect x="6" y="0" width="18.500" height="5.500" fill="#41a5ee"/><rect x="6" y="5.500" width="18.500" height="5.500" fill="#2b7cd3"/><rect x="6" y="11" width="18.500" height="5.500" fill="#185abd"/><rect x="6" y="16.500" width="18.500" height="5" fill="#103f91"/><rect x="0" y="4.500" width="13" height="13" rx="1" fill="#185abd"/><text x="6.500" y="15" text-anchor="middle" font-family="Liberation Sans,sans-serif" font-weight="bold" font-size="10" fill="#fff">W</text></svg>
<!-- excel -->
<svg class="a" style="left:845.500px;top:737px" width="25" height="22" viewBox="0 0 25 22"><rect x="6" y="0" width="9.300" height="5.500" fill="#21a366"/><rect x="15.300" y="0" width="9.200" height="5.500" fill="#33c481"/><rect x="6" y="5.500" width="9.300" height="5.500" fill="#107c41"/><rect x="15.300" y="5.500" width="9.200" height="5.500" fill="#21a366"/><rect x="6" y="11" width="9.300" height="5.500" fill="#185c37"/><rect x="15.300" y="11" width="9.200" height="5.500" fill="#107c41"/><rect x="6" y="16.500" width="18.500" height="5" fill="#185c37"/><rect x="0" y="4.500" width="13" height="13" rx="1" fill="#107c41"/><text x="6.500" y="15" text-anchor="middle" font-family="Liberation Sans,sans-serif" font-weight="bold" font-size="10" fill="#fff">X</text></svg>
<!-- powerpoint -->
<svg class="a" style="left:895px;top:736px" width="25" height="24" viewBox="0 0 25 24"><circle cx="13.500" cy="12" r="11.300" fill="#ed6c47"/><path d="M13.500 .7A11.300 11.300 0 0 1 24.800 12H13.500z" fill="#ff8f6b"/><path d="M2.200 12h22.600A11.300 11.300 0 0 1 2.200 12z" fill="#d35230"/><rect x="0" y="5.500" width="13" height="13" rx="1" fill="#c43e1c"/><text x="6.500" y="16" text-anchor="middle" font-family="Liberation Sans,sans-serif" font-weight="bold" font-size="10" fill="#fff">P</text></svg>
<!-- weather -->
<svg class="a" style="left:973px;top:740px" width="21" height="17" viewBox="0 0 21 17"><defs><linearGradient id="wc" x1="0" y1="0" x2="0" y2="1"><stop offset="0" stop-color="#fafdff"/><stop offset="1" stop-color="#9fd0f2"/></linearGradient></defs><path d="M5 12.500c-2.600 0-4.500-1.700-4.500-4s1.800-3.900 4-3.800C5.300 2.300 7.300.800 9.800.800c2.700 0 4.900 1.800 5.400 4.300 2.800-.2 5 1.500 5 3.800s-1.900 3.600-4.200 3.600z" fill="url(#wc)"/><path d="M10 9.500c1.300 1.800 2 3 2 4.200a2 2 0 0 1-4 0c0-1.200.7-2.400 2-4.200z" fill="#3fa0ea"/></svg>
<div class="a tk" style="left:1004.5px;top:742.5px;font-size:13.2px;letter-spacing:-0.175px;">30°C</div>
<svg class="a" style="left:1050px;top:745px" width="14" height="8" viewBox="0 0 14 8" fill="none" stroke="#fff" stroke-width="1.300"><path d="M.7 7.300L7 1l6.300 6.300"/></svg>
<!-- bluetooth -->
<svg class="a" style="left:1075px;top:740px" width="12" height="16" viewBox="0 0 12 16"><rect x="0" y="0" width="12" height="16" rx="5.500" fill="#0a84ff"/><path d="M3.200 5l5.200 5.200L6 12.700V3.300l2.400 2.500L3.200 11" fill="none" stroke="#fff" stroke-width="1"/></svg>
<!-- onedrive -->
<svg class="a" style="left:1096px;top:742px" width="18" height="12" viewBox="0 0 18 12"><path d="M4.500 11.500C2.300 11.500.6 10.200.6 8.300c0-1.700 1.300-3 3.100-3.100C4.400 2.700 6.300 1 8.800 1c2.300 0 4.200 1.400 4.800 3.500 2.200 0 3.900 1.500 3.900 3.500s-1.600 3.500-3.800 3.500z" fill="#b9bdbf"/><path d="M.8 9.200L9.500 5.500l7.800 3.600c-.4 1.400-1.800 2.400-3.600 2.400H4.500c-1.900 0-3.300-1-3.700-2.300z" fill="#f4f4f4"/></svg>
<!-- meet now -->
<svg class="a" style="left:1124px;top:740px" width="13" height="17" viewBox="0 0 13 17" fill="none" stroke="#fff" stroke-width="1.100"><rect x=".6" y="4.600" width="8" height="7.800" rx="1.500"/><path d="M8.800 7.200l3-1.700v6l-3-1.700M2.300 2C3.500.9 5.700.9 7 2M2.300 15c1.200 1.100 3.400 1.100 4.700 0"/></svg>
<!-- wifi -->
<svg class="a" style="left:1147px;top:741px" width="15" height="15" viewBox="0 0 15 15" fill="none" stroke="#fff" stroke-width="1.200"><circle cx="12.300" cy="12.700" r="1.300" fill="#fff" stroke="none"/><path d="M8 13.500a4.500 4.500 0 0 1 5-5.300" opacity=".95"/><path d="M4.700 13.800a8 8 0 0 1 8.800-9" opacity=".9"/><path d="M1.300 14a11.500 11.500 0 0 1 12.500-12.700" opacity=".85"/></svg>
<!-- battery -->
<svg class="a" style="left:1169.500px;top:743.500px" width="17" height="13" viewBox="0 0 17 13"><rect x="1.200" y=".6" width="12.600" height="8.200" rx=".8" fill="none" stroke="#fff" stroke-width="1.200"/><rect x="2.800" y="2.300" width="8" height="4.800" fill="#fff"/><rect x="14.300" y="3" width="1.300" height="3.500" fill="#fff"/><circle cx="11" cy="8" r="4.400" fill="#13a10e"/><path d="M11 5c1.600 1.300 2.200 2.600 1.600 3.800-.4.700-1 1-1.600 1s-1.200-.3-1.600-1C8.800 7.600 9.400 6.300 11 5z" fill="#fff"/><path d="M11 7v3.500" stroke="#13a10e" stroke-width=".7"/></svg>
<!-- volume -->
<svg class="a" style="left:1192.500px;top:741px" width="18" height="14" viewBox="0 0 18 14" fill="none" stroke="#fff" stroke-width="1.100"><path d="M.7 4.700h2.800L7.200 1v12L3.500 9.300H.7z"/><path d="M9.500 4.500c1 1.400 1 3.600 0 5M12 2.700c1.900 2.400 1.900 6.200 0 8.600M14.500 1c2.800 3.400 2.800 8.600 0 12"/></svg>
<div class="a tk" style="left:1221.0px;top:742.7px;font-size:11.6px;letter-spacing:-0.456px;">ESP</div>
<div class="a tk" style="left:1270.7px;top:734.0px;font-size:11.2px;letter-spacing:-0.766px;">9:43</div>
<div class="a tk" style="left:1255.5px;top:751.6px;font-size:11.2px;letter-spacing:-0.050px;">12/4/2022</div>
<svg class="a" style="left:1325px;top:740px" width="17" height="16" viewBox="0 0 17 16" fill="none" stroke="#fff" stroke-width="1.200"><path d="M.7.700h15.200v11.400h-4.700L8.300 15l-2.900-2.900H.7z"/></svg>
<div class="a" style="left:1361px;top:728px;width:1px;height:40px;background:#566267"></div>


</body>
</html>
